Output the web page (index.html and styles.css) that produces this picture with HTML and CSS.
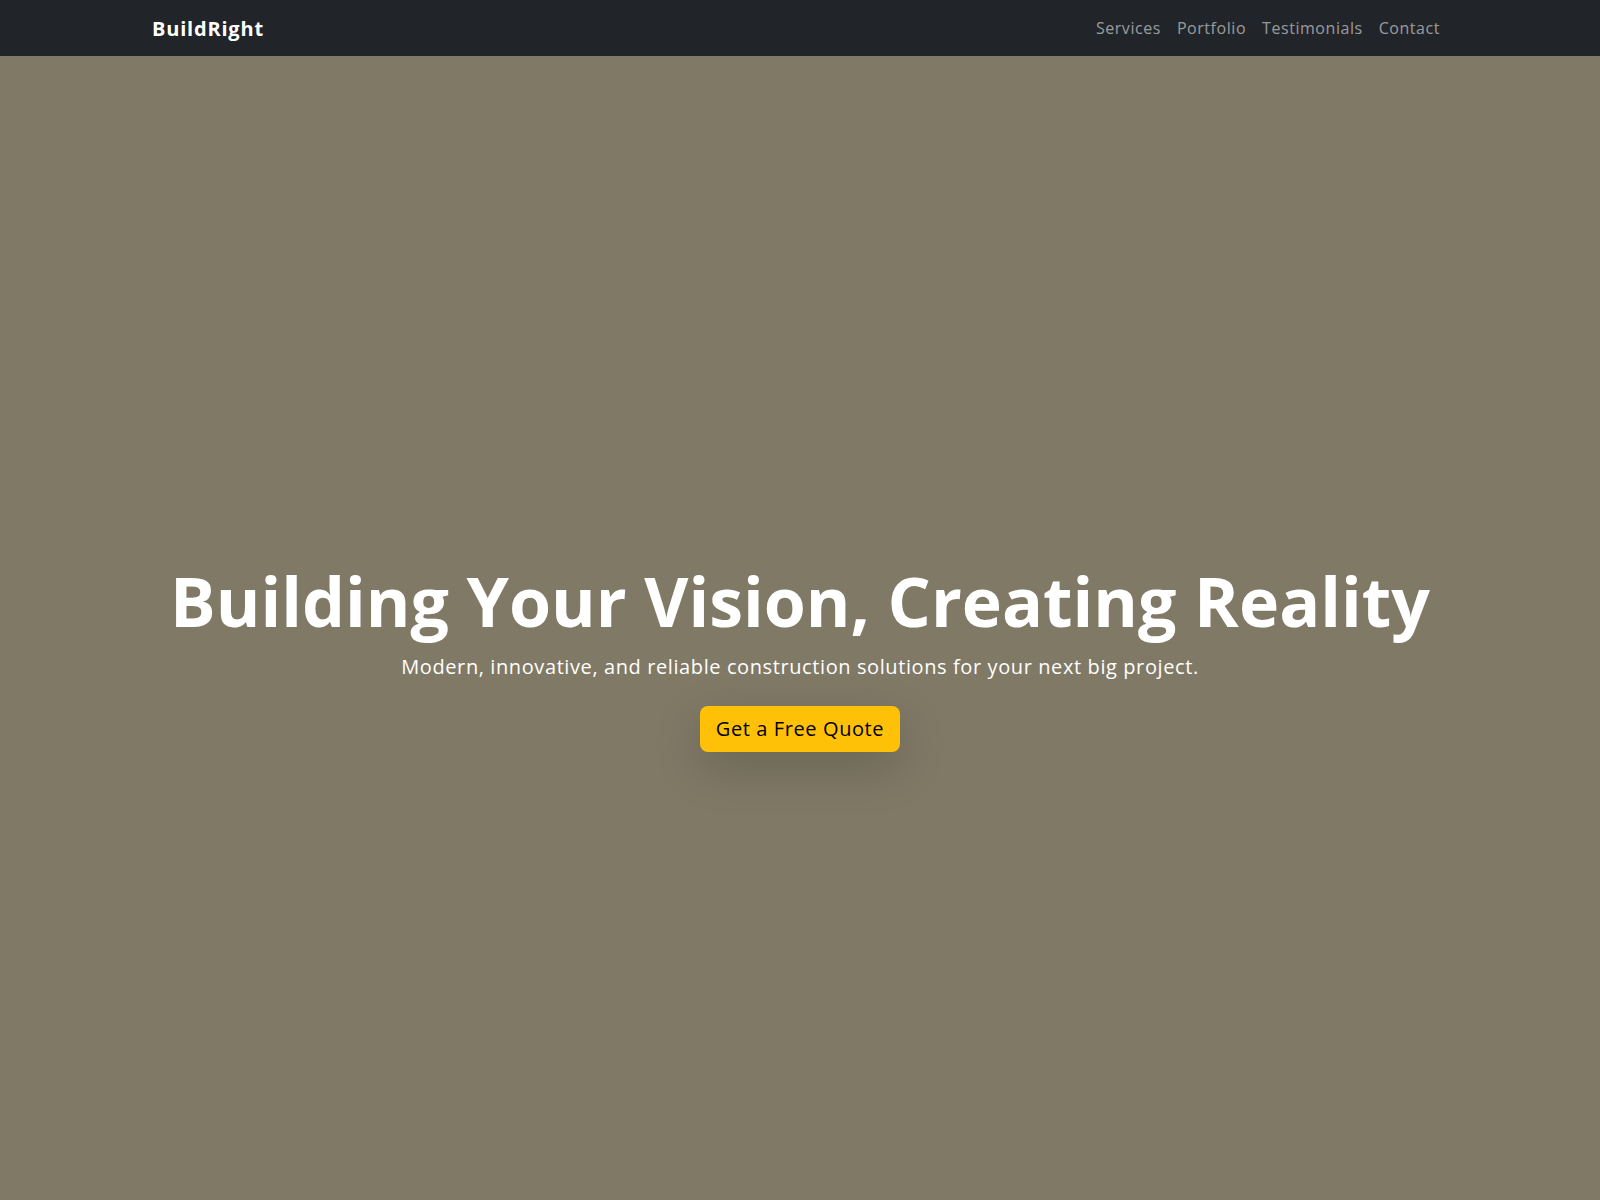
FILE: index.html
```html
<!DOCTYPE html>
<html lang="en">
<head>
<meta charset="utf-8">
<title>BuildRight</title>
<link rel="stylesheet" href="styles.css">
</head>
<body>
<nav class="navbar">
  <div class="container nav-inner">
    <a class="brand" href="#">BuildRight</a>
    <ul class="nav-links">
      <li><a href="#services">Services</a></li>
      <li><a href="#portfolio">Portfolio</a></li>
      <li><a href="#testimonials">Testimonials</a></li>
      <li><a href="#contact">Contact</a></li>
    </ul>
  </div>
</nav>
<header class="hero">
  <div class="hero-content">
    <h1 class="hero-title">Building Your Vision, Creating Reality</h1>
    <p class="hero-lead">Modern, innovative, and reliable construction solutions for your next big project.</p>
    <a class="btn-quote" href="#contact">Get a Free Quote</a>
  </div>
</header>
</body>
</html>
```
FILE: styles.css
```css
* { box-sizing: border-box; }
html, body { margin: 0; padding: 0; }
body {
  font-family: "Open Sans", "DejaVu Sans", sans-serif;
  background: #807966;
  color: #fff;
}
.navbar {
  background: #212529;
  height: 56px;
  display: flex;
  align-items: center;
}
.container {
  width: 1320px;
  margin: 0 auto;
  padding: 0 12px;
}
.nav-inner {
  display: flex;
  align-items: center;
  justify-content: space-between;
}
.brand {
  color: #fff;
  text-decoration: none;
  font-weight: 700;
  font-size: 20px;
  letter-spacing: 0.8px;
  padding: 4px 0;
}
.nav-links {
  list-style: none;
  margin: 0;
  padding: 0;
  display: flex;
}
.nav-links a {
  display: block;
  padding: 8px;
  color: rgba(255,255,255,0.55);
  text-decoration: none;
  font-size: 16px;
  letter-spacing: 0.55px;
}
.hero {
  min-height: 100vh;
  display: flex;
  align-items: center;
  justify-content: center;
  text-align: center;
  background: #807966;
}
.hero-content {
  display: flex;
  flex-direction: column;
  align-items: center;
}
.hero-title {
  margin: 0 0 10px;
  font-size: 68px;
  font-weight: 700;
  line-height: 1.2;
}
.hero-lead {
  margin: 0 0 24px;
  font-size: 20px;
  line-height: 1.5;
  font-weight: 400;
  letter-spacing: 0.6px;
}
.btn-quote {
  display: inline-block;
  background: #ffc107;
  color: #000;
  text-decoration: none;
  font-size: 20px;
  line-height: 1.5;
  letter-spacing: 0.6px;
  padding: 8px 16px;
  border-radius: 8px;
  box-shadow: 0 16px 48px rgba(0,0,0,0.18);
}
```
